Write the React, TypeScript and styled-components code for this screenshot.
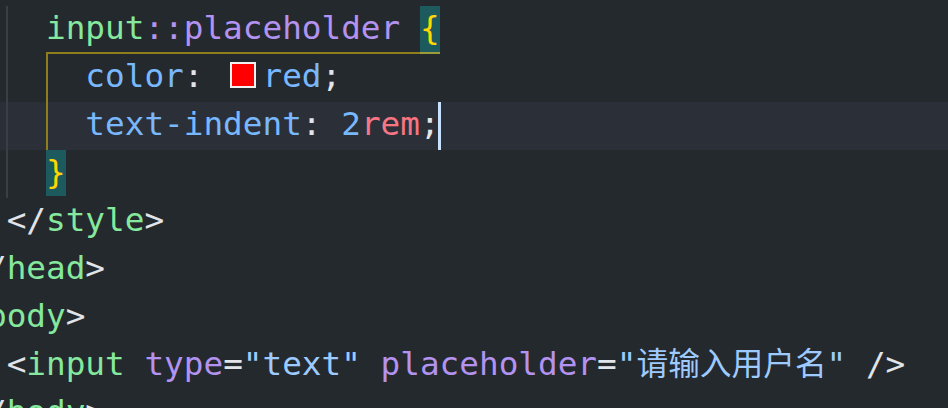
import React from "react";
import styled, { createGlobalStyle, css } from "styled-components";

const Global = createGlobalStyle`
  html, body { margin: 0; padding: 0; background: #24292e; }
  body { overflow: hidden; }
`;

const C = {
  bg: "#24292e",
  current: "#2b3038",
  tag: "#85e89d",
  attr: "#b392f0",
  str: "#9ecbff",
  prop: "#79b8ff",
  unit: "#f97583",
  punct: "#e1e4e8",
  brace: "#ffd700",
  braceBg: "#1d5a5e",
  guide: "#3a3e45",
  pair: "#8f7f1c",
  pairLight: "#9c9a3a",
  cursor: "#c8e1ff",
};

const Editor = styled.div`
  width: 948px;
  height: 408px;
  overflow: hidden;
  background: ${C.bg};
  padding-top: 6px;
  box-sizing: border-box;
  font-family: "DejaVu Sans Mono", "Noto Sans CJK SC", monospace;
  font-size: 32.7px;
  color: ${C.punct};
`;

type RowProps = {
  $current?: boolean;
  $indentGuide?: boolean;
  $pairTop?: boolean;
  $pairSide?: boolean;
};

const Row = styled.div<RowProps>`
  display: flex;
  height: 48px;
  line-height: 44px;
  white-space: pre;
  ${(p) => {
    const layers: string[] = [];
    if (p.$pairTop) {
      layers.push(`linear-gradient(${C.pairLight}, ${C.pairLight}) no-repeat 420px 46px / 20px 2px`);
      layers.push(`linear-gradient(${C.pair}, ${C.pair}) no-repeat 46px 46px / 374px 2px`);
    }
    if (p.$pairSide) {
      layers.push(`linear-gradient(${C.pair}, ${C.pair}) no-repeat 46px 0 / 2px 100%`);
    }
    if (p.$indentGuide) {
      layers.push(`linear-gradient(${C.guide}, ${C.guide}) no-repeat 6px 0 / 2px 100%`);
    }
    const base = p.$current ? C.current : "transparent";
    return css`
      background: ${layers.length ? layers.join(", ") + ", " : ""}${base};
    `;
  }}
`;

const Code = styled.span`
  margin-left: -72.1px;
  flex-shrink: 0;
`;

const Tok = styled.span<{ $c: string }>`
  color: ${(p) => p.$c};
`;

const Cjk = styled.span`
  font-family: "Noto Sans CJK SC", sans-serif;
  font-size: 31.7px;
  line-height: 30px;
  color: ${C.str};
`;

const Brace = styled.span`
  display: inline-block;
  vertical-align: top;
  height: 46px;
  line-height: 44px;
  background: ${C.braceBg};
  color: ${C.brace};
`;

const Swatch = styled.span`
  display: inline-block;
  box-sizing: border-box;
  width: 26px;
  height: 26px;
  margin: 0 6.4px 0 7px;
  vertical-align: -1px;
  background: #ff0000;
  border: 2px solid #f2f2f2;
`;

const Cursor = styled.span`
  display: inline-block;
  vertical-align: top;
  width: 3px;
  height: 48px;
  margin-left: -1.5px;
  background: ${C.cursor};
`;

export default function App() {
  return (
    <>
      <Global />
      <Editor>
        <Row $indentGuide $pairTop>
          <Code>
            {"      "}
            <Tok $c={C.tag}>input</Tok>
            <Tok $c={C.attr}>::placeholder</Tok>
            {" "}
            <Brace>{"{"}</Brace>
          </Code>
        </Row>
        <Row $indentGuide $pairSide>
          <Code>
            {"        "}
            <Tok $c={C.prop}>color</Tok>
            <Tok $c={C.punct}>{": "}</Tok>
            <Swatch />
            <Tok $c={C.prop}>red</Tok>
            <Tok $c={C.punct}>;</Tok>
          </Code>
        </Row>
        <Row $indentGuide $pairSide $current>
          <Code>
            {"        "}
            <Tok $c={C.prop}>text-indent</Tok>
            <Tok $c={C.punct}>{": "}</Tok>
            <Tok $c={C.prop}>2</Tok>
            <Tok $c={C.unit}>rem</Tok>
            <Tok $c={C.punct}>;</Tok>
            <Cursor />
          </Code>
        </Row>
        <Row $indentGuide>
          <Code>
            {"      "}
            <Brace>{"}"}</Brace>
          </Code>
        </Row>
        <Row>
          <Code>
            {"    "}
            <Tok $c={C.punct}>{"</"}</Tok>
            <Tok $c={C.tag}>style</Tok>
            <Tok $c={C.punct}>{">"}</Tok>
          </Code>
        </Row>
        <Row>
          <Code>
            {"  "}
            <Tok $c={C.punct}>{"</"}</Tok>
            <Tok $c={C.tag}>head</Tok>
            <Tok $c={C.punct}>{">"}</Tok>
          </Code>
        </Row>
        <Row>
          <Code>
            {"  "}
            <Tok $c={C.punct}>{"<"}</Tok>
            <Tok $c={C.tag}>body</Tok>
            <Tok $c={C.punct}>{">"}</Tok>
          </Code>
        </Row>
        <Row>
          <Code>
            {"    "}
            <Tok $c={C.punct}>{"<"}</Tok>
            <Tok $c={C.tag}>input</Tok>
            {" "}
            <Tok $c={C.attr}>type</Tok>
            <Tok $c={C.punct}>=</Tok>
            <Tok $c={C.str}>"text"</Tok>
            {" "}
            <Tok $c={C.attr}>placeholder</Tok>
            <Tok $c={C.punct}>=</Tok>
            <Tok $c={C.str}>"</Tok>
            <Cjk>请输入用户名</Cjk>
            <Tok $c={C.str}>"</Tok>
            {" "}
            <Tok $c={C.punct}>{"/>"}</Tok>
          </Code>
        </Row>
        <Row>
          <Code>
            {"  "}
            <Tok $c={C.punct}>{"</"}</Tok>
            <Tok $c={C.tag}>body</Tok>
            <Tok $c={C.punct}>{">"}</Tok>
          </Code>
        </Row>
      </Editor>
    </>
  );
}
